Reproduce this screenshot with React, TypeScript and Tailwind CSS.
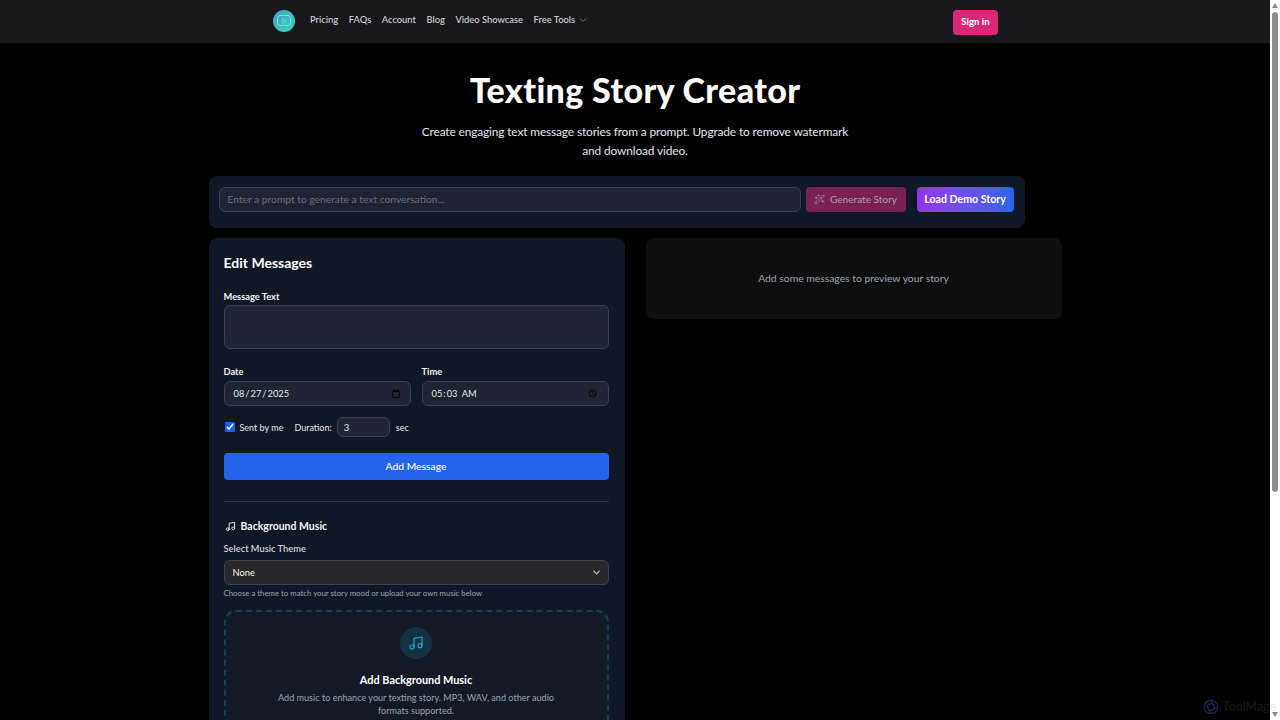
import React from "react";
import { ChevronDown, Music, WandSparkles, Play } from "lucide-react";

const font = { fontFamily: '"Lato", "Liberation Sans", sans-serif' };
const inputBase =
  "block rounded-md border border-[#394151] bg-[#1e2431] text-[#e5e7eb] outline-none";

export default function App() {
  return (
    <div className="relative flex h-screen w-full overflow-hidden bg-black text-white font-['Lato',sans-serif] [color-scheme:dark]">
      <div className="h-full min-w-0 flex-1 overflow-hidden">
        <header className="h-[43px] bg-[#18181b]">
          <div className="mx-auto flex h-full w-[726px] items-center justify-between">
            <nav className="flex items-center pb-[2px] pl-[1px]">
              <span className="mr-[15px] flex h-[22px] w-[22px] items-center justify-center rounded-full bg-gradient-to-br from-[#3f9fc6] to-[#3ed6b5]">
                <span className="flex h-[11px] w-[14px] items-center justify-center rounded-[3px] border border-[#86dbe0]">
                  <Play size={6} strokeWidth={1.5} className="text-[#c8f2f2]" />
                </span>
              </span>
              <div className="flex items-center gap-[10.5px] text-[9.4px] font-medium text-[#d4d4d8]">
                <span>Pricing</span>
                <span>FAQs</span>
                <span>Account</span>
                <span>Blog</span>
                <span>Video Showcase</span>
                <span className="flex items-center gap-[2px]">
                  Free Tools
                  <ChevronDown size={12} strokeWidth={1.25} className="text-[#a1a1aa]" />
                </span>
              </div>
            </nav>
            <button className="mt-[1px] h-[25px] w-[45px] rounded-[4px] bg-[#db2777] text-[9.6px] font-bold text-white">
              Sign in
            </button>
          </div>
        </header>

        <main className="mx-auto w-[853px]">
          <h1 className="mt-[25px] text-center text-[34px] leading-[44px] font-black tracking-[0.35px] text-white">
            Texting Story Creator
          </h1>
          <p className="mx-auto mt-[10px] w-[436px] text-center text-[11.9px] leading-[19px] tracking-[-0.13px] text-[#e5e7eb]">
            Create engaging text message stories from a prompt. Upgrade to remove watermark and download video.
          </p>

          <section className="mt-[16px] flex h-[52px] w-[816px] items-start rounded-lg bg-[#101725] pt-[11px] pl-[10px]">
            <input
              placeholder="Enter a prompt to generate a text conversation..."
              style={font}
              className={`${inputBase} h-[25px] w-[582px] px-[8px] pb-[2px] text-[10.25px] placeholder:text-[#6b7280]`}
            />
            <button className="ml-[5px] flex h-[25px] w-[100px] items-center justify-center gap-[5px] rounded-[4px] bg-[#7a2152] text-[10.1px] text-[#a8a0a8]">
              <WandSparkles size={11} strokeWidth={1.5} />
              Generate Story
            </button>
            <button className="ml-[11px] h-[25px] w-[97px] rounded-[4px] bg-gradient-to-r from-[#9333ea] to-[#2563eb] text-[10.6px] font-bold text-white">
              Load Demo Story
            </button>
          </section>

          <div className="mt-[10px] grid grid-cols-[416px_416px] items-start gap-[21px]">
            <section className="h-[600px] rounded-lg bg-[#101725] pt-[15px] pr-[16px] pl-[15px]">
              <h2 className="text-[14px] leading-[20px] font-bold text-white">Edit Messages</h2>
              <label className="mt-[17px] block text-[9.3px] leading-[14px] font-bold text-[#f3f4f6]">Message Text</label>
              <textarea style={font} className={`${inputBase} mt-[1px] h-[44px] w-full resize-none`} />
              <div className="mt-[16px] grid grid-cols-[187px_187px] gap-[11px]">
                <div>
                  <label className="block text-[9.3px] leading-[14px] font-bold text-[#f3f4f6]">Date</label>
                  <input
                    type="date"
                    defaultValue="2025-08-27"
                    style={font}
                    className={`${inputBase} mt-[2px] h-[25px] w-full pr-[7px] pl-[8px] text-[9.3px] [color-scheme:light]`}
                  />
                </div>
                <div>
                  <label className="block text-[9.3px] leading-[14px] font-bold text-[#f3f4f6]">Time</label>
                  <input
                    type="time"
                    defaultValue="05:03"
                    style={font}
                    className={`${inputBase} mt-[2px] h-[25px] w-full pr-[7px] pl-[8px] text-[9.3px] [color-scheme:light]`}
                  />
                </div>
              </div>
              <div className="mt-[11px] flex h-[20px] items-center text-[9px] text-[#e5e7eb]">
                <input type="checkbox" defaultChecked className="ml-[1px] h-[10px] w-[10px] accent-blue-600" />
                <span className="ml-[5px] pt-[1px]">Sent by me</span>
                <span className="ml-[11px] pt-[1px]">Duration:</span>
                <input
                  defaultValue="3"
                  style={font}
                  className={`${inputBase} ml-[5px] h-[20px] w-[53px] px-[6px] text-[9.5px]`}
                />
                <span className="ml-[6px] pt-[1px]">sec</span>
              </div>
              <button className="mt-[16px] block h-[27px] w-full rounded-[4px] bg-[#2563eb] text-[10.3px] font-medium text-white">
                Add Message
              </button>
              <div className="mt-[21px] border-t border-[#2a3443]" />
              <h3 className="mt-[16px] flex items-center gap-[5px] pl-[1px] text-[10.5px] leading-[16px] font-bold text-[#f3f4f6]">
                <Music size={11} strokeWidth={2} />
                Background Music
              </h3>
              <label className="mt-[8px] block text-[9.3px] leading-[14px] font-semibold text-[#d1d5db]">Select Music Theme</label>
              <div className="relative mt-[4px]">
                <select
                  style={font}
                  className="block h-[25px] w-full appearance-none rounded-md border border-[#394151] bg-[#27272a] pt-[1px] pl-[8px] text-[9.3px] text-[#f3f4f6] outline-none"
                  defaultValue="None"
                >
                  <option>None</option>
                </select>
                <ChevronDown
                  size={11}
                  strokeWidth={2.5}
                  className="pointer-events-none absolute top-[7px] right-[7px] text-[#c4c4c4]"
                />
              </div>
              <p className="mt-[2px] text-[7.8px] leading-[13px] text-[#9ca3af]">
                Choose a theme to match your story mood or upload your own music below
              </p>
              <div className="mt-[10px] h-[200px] rounded-xl border-2 border-dashed border-[#15404f] bg-[#131a26] pt-[15px] text-center">
                <span className="mx-auto flex h-[32px] w-[32px] items-center justify-center rounded-full bg-[#123244]">
                  <Music size={16} strokeWidth={1.75} className="text-[#22a5c7]" />
                </span>
                <div className="mt-[13px] text-[10.9px] leading-[16px] font-bold text-white">Add Background Music</div>
                <p className="mx-auto mt-[3px] w-[300px] text-[9.1px] leading-[13px] text-[#9ca3af]">
                  Add music to enhance your texting story. MP3, WAV, and other audio formats supported.
                </p>
              </div>
            </section>
            <section className="flex h-[81px] items-center justify-center rounded-lg bg-[#0e0e0f] text-[10.35px] text-[#9ca3af]">
              Add some messages to preview your story
            </section>
          </div>
        </main>
      </div>

      <aside className="flex h-full w-[10px] shrink-0 flex-col items-center justify-between bg-white py-[3px]">
        <span className="h-0 w-0 border-x-[3px] border-b-[5px] border-x-transparent border-b-[#8a8a8a]" />
        <span className="absolute top-[12px] h-[480px] w-[6px] rounded-full bg-[#8f8f8f]" />
        <span className="h-0 w-0 border-x-[3px] border-t-[5px] border-x-transparent border-t-[#8a8a8a]" />
      </aside>

      <div className="absolute right-[4px] bottom-[4px] flex items-center gap-[4px] text-[12.3px] font-semibold text-[#8080802e]">
        <svg width="16" height="16" viewBox="0 0 24 24" fill="none" stroke="#14284f" strokeWidth="2">
          <circle cx="12" cy="12" r="10" />
          <circle cx="12" cy="12" r="5" />
          <path d="M12 2 L17 12 M22 12 L12 17 M12 22 L7 12 M2 12 L12 7" />
        </svg>
        ToolMage
      </div>
    </div>
  );
}
